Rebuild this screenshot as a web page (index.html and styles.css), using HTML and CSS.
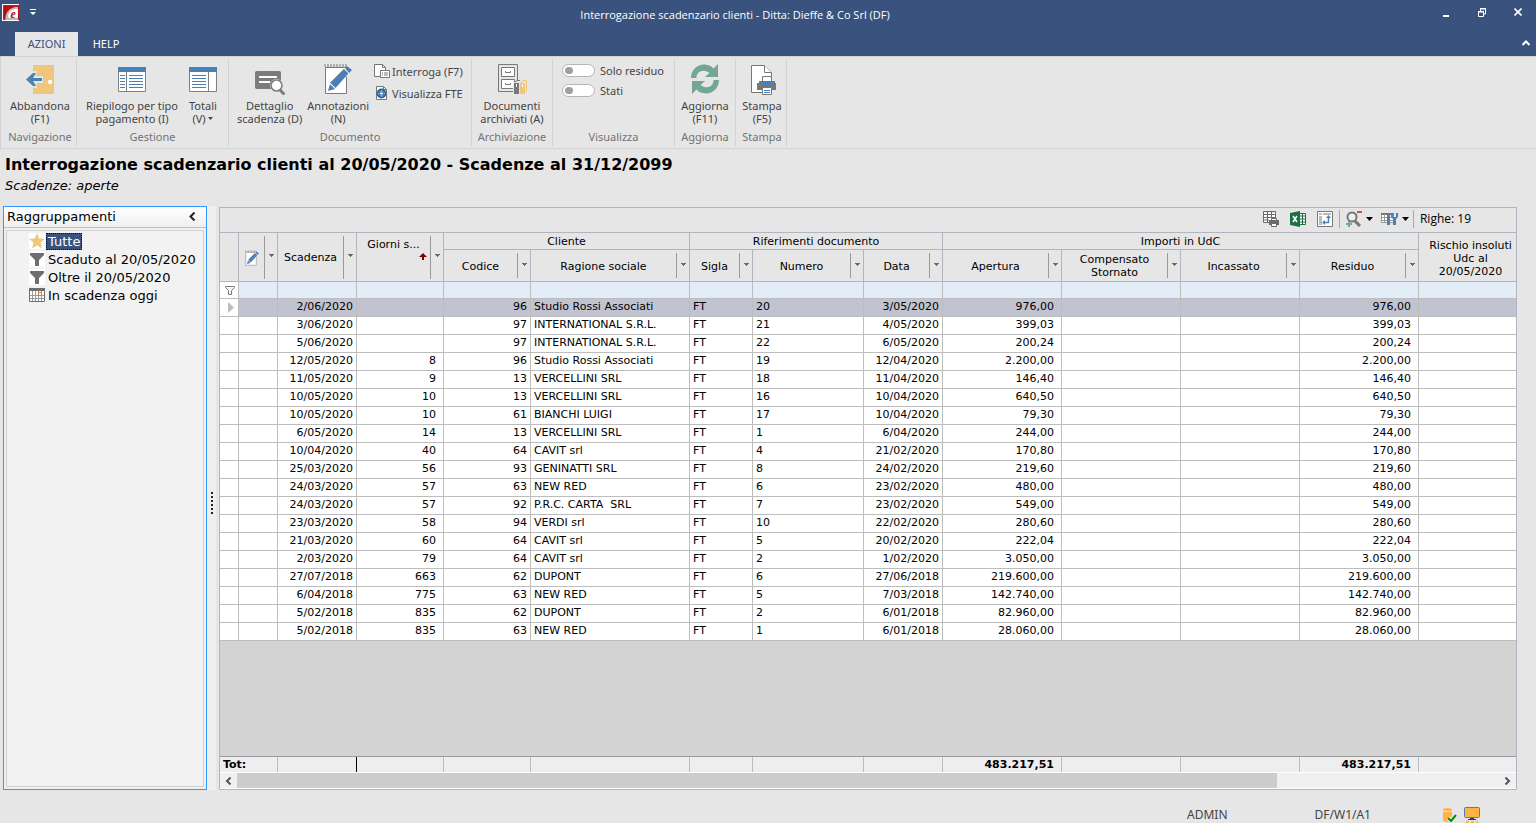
FILE: index.html
```html
<!DOCTYPE html>
<html lang="it">
<head>
<meta charset="utf-8">
<title>Interrogazione scadenzario clienti</title>
<link rel="stylesheet" href="styles.css">
</head>
<body>
<svg class="defs" aria-hidden="true">
  <symbol id="dd" viewBox="0 0 5 3"><path d="M0 0h5v1H4v1H3v1H2V2H1V1H0z" fill="#6b6b6b"/></symbol>
  <symbol id="funnel" viewBox="0 0 16 16"><path d="M0 0h16v16H0z" fill="#fff"/><path d="M1 2h14v2l-5 5v6H6V9L1 4z" fill="#6e6e6e"/></symbol>
  <symbol id="note" viewBox="0 0 28 32"><path d="M1.500 4.500h21v26h-21z" fill="#fff" stroke="#7b7b7b"/><path d="M1 4V1M4 5V1M7 5V1M10 5V1M13 5V1M16 5V1M19 5V1M22 5V1" stroke="#7b7b7b"/><path d="M4 27l2-8L20 5l6 5L11 25z" fill="#fff"/><path d="M4 28l2-7 5 5zM6.500 20L20 6l4.500 4.500L11.500 25z" fill="#4a80b8"/><path d="M6 20L20 6M5 27l-1 1" stroke="#9b9b9b" fill="none"/><path d="M21 5l2-2 5 4-3 3z" fill="#4a80b8"/></symbol>
</svg>

<header class="titlebar">
  <svg class="logo" viewBox="0 0 16 16"><path d="M0 0h16v16H0z" fill="#fff"/><path d="M1 1h15v14H1z" fill="#b90d16"/><path d="M3 15C3 7 8 2.500 15 2.500V15z" fill="#bbb"/><path d="M6 13C5 8 9 4.500 15 4.500V13z" fill="#fff"/><text x="8" y="13" class="logo-e">e</text></svg>
  <button class="quick" aria-label="Personalizza"><svg width="6" height="6" viewBox="0 0 6 6"><path d="M0 0h6v1H0zM0 3h6L3 6z" fill="#fff"/></svg></button>
  <h1 class="caption">Interrogazione scadenzario clienti - Ditta: Dieffe &amp; Co Srl (DF)</h1>
  <div class="winbtns">
    <button aria-label="Riduci"><svg width="8" height="9" viewBox="0 0 8 9"><path d="M1 7h6v2H1z" fill="#fff"/></svg></button>
    <button aria-label="Ripristina"><svg width="8" height="9" viewBox="0 0 8 9"><path d="M2.500 3V.500h5V6H6M.500 3.500h5v5h-5z" fill="none" stroke="#fff"/><path d="M2 0h6v1.500H2zM0 3h6v1.500H0z" fill="#fff"/></svg></button>
    <button aria-label="Chiudi"><svg width="8" height="8" viewBox="0 0 8 8"><path d="M.500.500l7 7m0-7l-7 7" stroke="#fff" stroke-width="1.600"/></svg></button>
  </div>
</header>
<nav class="tabs">
  <button class="tab active">AZIONI</button>
  <button class="tab">HELP</button>
  <button class="collapse" aria-label="Comprimi barra"><svg width="8" height="6" viewBox="0 0 8 6"><path d="M.500 5L4 1.500 7.500 5" fill="none" stroke="#fff" stroke-width="2"/></svg></button>
</nav>

<section class="ribbon">
  <div class="group g-nav">
    <div class="tools">
      <button class="big"><svg width="30" height="32" viewBox="0 0 30 32"><path d="M8 2h21v29H8z" fill="#efc67c"/><circle cx="25" cy="19" r="2.200" fill="#fff"/><path d="M0 16l9-8h3l-1 5h7v7h-7l1 5H9z" fill="#e6e6e6"/><path d="M1 16.500L8 10h3l-3 5h9v3H8l3 5H8z" fill="#4a80b8"/></svg><span>Abbandona<br>(F1)</span></button>
    </div>
    <div class="gname">Navigazione</div>
  </div>
  <div class="group g-ges">
    <div class="tools">
      <button class="big"><svg width="28" height="32" viewBox="0 0 28 32"><path d="M.500 6v22.500h27V6z" fill="#fff" stroke="#808080"/><path d="M0 4h28v5H0z" fill="#4a80b8"/><path d="M8.500 9v19" stroke="#808080"/><path d="M2 12.500h5M2 15.500h5M2 18.500h5M2 21.500h5M2 24.500h5M11 12.500h14M11 15.500h14M11 18.500h14M11 21.500h14M11 24.500h14" stroke="#4a80b8"/></svg><span>Riepilogo per tipo<br>pagamento (I)</span></button>
      <button class="big"><svg width="28" height="32" viewBox="0 0 28 32"><path d="M.500 6v22.500h27V6z" fill="#fff" stroke="#808080"/><path d="M0 4h28v5H0z" fill="#4a80b8"/><path d="M19.500 9v19" stroke="#808080"/><path d="M3 12.500h14M3 15.500h14M3 18.500h14M3 21.500h14M3 24.500h14" stroke="#4a80b8"/></svg><span>Totali<br>(V) <svg class="tri" viewBox="0 0 5 3"><path d="M0 0h5L2.500 3z" fill="#444"/></svg></span></button>
    </div>
    <div class="gname">Gestione</div>
  </div>
  <div class="group g-doc">
    <div class="tools">
      <button class="big"><svg width="30" height="32" viewBox="0 0 30 32"><rect y="8" width="26" height="18" rx="2" fill="#7b7b7b"/><path d="M4 14h18M4 19h11" stroke="#fff" stroke-width="2"/><circle cx="21.500" cy="22.500" r="6.500" fill="#fff"/><circle cx="21.500" cy="22.500" r="5.500" fill="#fff" stroke="#7b7b7b" stroke-width="1.600"/><path d="M25 27l4.500 4.500" stroke="#7b7b7b" stroke-width="3"/></svg><span>Dettaglio<br>scadenza (D)</span></button>
      <button class="big"><svg width="28" height="32"><use href="#note"/></svg><span>Annotazioni<br>(N)</span></button>
      <div class="stack">
        <button class="small"><svg width="16" height="16" viewBox="0 0 16 16"><path d="M.500 1.500h8l3 3v9h-11z" fill="#fff" stroke="#777"/><path d="M8.500 1.500v3h3" fill="none" stroke="#777"/><path d="M6.500 7.500h9v7h-9z" fill="#fff" stroke="#777"/><path d="M8 10h1M10 10h4M8 12h1M10 12h4" stroke="#777"/></svg><span>Interroga (F7)</span></button>
        <button class="small"><svg width="16" height="16" viewBox="0 0 16 16"><path d="M2.500 1.500h7l3 3v10h-10z" fill="#fff" stroke="#777"/><path d="M9.500 1.500v3h3" fill="none" stroke="#777"/><circle cx="7.500" cy="8.500" r="4" fill="#eaf2fa" stroke="#2f67a6" stroke-width="2"/><ellipse cx="7.500" cy="8.500" rx="2" ry="4" fill="none" stroke="#2f67a6"/><path d="M4 7h7M4 10h7" stroke="#2f67a6"/></svg><span>Visualizza FTE</span></button>
      </div>
    </div>
    <div class="gname">Documento</div>
  </div>
  <div class="group g-arc">
    <div class="tools">
      <button class="big"><svg width="30" height="32" viewBox="0 0 30 32"><path d="M1.500 1.500h19v27h-19z" fill="#e6e6e6" stroke="#777"/><path d="M4.500 4.500h13v9h-13zM4.500 16.500h13v9h-13z" fill="#fff" stroke="#777"/><path d="M8.500 8v1.500h5V8M8.500 20v1.500h5V20" fill="none" stroke="#777"/><path d="M16 20l5-3h9v12l-2 3H16z" fill="#e6e6e6"/><path d="M17 20h5v11h-5z" fill="#777"/><path d="M23 20h5v11h-5z" fill="#efc67c"/><path d="M18 19l2-1.500h3" fill="none" stroke="#777"/><path d="M24 19l2-1.500h3.500V29" fill="none" stroke="#efc67c"/><path d="M19.500 21v3" stroke="#fff"/><path d="M25.500 21v3" stroke="#fff"/></svg><span>Documenti<br>archiviati (A)</span></button>
    </div>
    <div class="gname">Archiviazione</div>
  </div>
  <div class="group g-vis">
    <div class="tools switches">
      <label><input type="checkbox" class="switch">Solo residuo</label>
      <label><input type="checkbox" class="switch">Stati</label>
    </div>
    <div class="gname">Visualizza</div>
  </div>
  <div class="group g-agg">
    <div class="tools">
      <button class="big"><svg width="28" height="32" viewBox="0 0 28 32"><path d="M0 15C0 6 8 0 16 2c3 0 5 2 6.500 3.500L27 1v13H14l4.500-4C12 5 5 9 5.500 15z" fill="#74a793"/><path d="M28 17c0 9-8 15-16 13-3 0-5-2-6.500-3.500L1 31V18h13l-4.500 4c6.500 5 13.500 1 13-5z" fill="#74a793"/></svg><span>Aggiorna<br>(F11)</span></button>
    </div>
    <div class="gname">Aggiorna</div>
  </div>
  <div class="group g-sta">
    <div class="tools">
      <button class="big"><svg width="28" height="32" viewBox="0 0 28 32"><path d="M3.500 2.500h13l7 7v20h-20z" fill="#fff" stroke="#777"/><path d="M16.500 2.500v7h7" fill="#fff" stroke="#777"/><path d="M9 20h19v7H9zM11 18h2v2h-2zM25 18h2v2h-2z" fill="#777"/><path d="M14.500 13.500h9v5h-9z" fill="#fff" stroke="#777"/><path d="M13 18h12v4H13z" fill="#4a80b8"/><path d="M14.500 24.500h9v7h-9z" fill="#fff" stroke="#777"/><path d="M16 27.500h6M16 29.500h6" stroke="#4a80b8"/></svg><span>Stampa<br>(F5)</span></button>
    </div>
    <div class="gname">Stampa</div>
  </div>
</section>

<div class="heading">
  <h2>Interrogazione scadenzario clienti al 20/05/2020 - Scadenze al 31/12/2099</h2>
  <p>Scadenze: aperte</p>
</div>

<main class="work">
  <aside class="side">
    <div class="side-head"><span>Raggruppamenti</span><button aria-label="Chiudi pannello"><svg width="7" height="9" viewBox="0 0 7 9"><path d="M5.500.500l-4 4 4 4" fill="none" stroke="#222" stroke-width="2"/></svg></button></div>
    <ul class="tree">
      <li><button class="sel"><svg viewBox="0 0 16 16"><path d="M0 0h16v16H0z" fill="#fff"/><path d="M8 0l2.200 5.500 5.800.300-4.500 3.800L13 15.500 8 12.200l-5 3.300 1.500-5.900L0 5.800l5.800-.300z" fill="#efc67c"/></svg><span>Tutte</span></button></li>
      <li><button><svg><use href="#funnel"/></svg><span>Scaduto al 20/05/2020</span></button></li>
      <li><button><svg><use href="#funnel"/></svg><span>Oltre il 20/05/2020</span></button></li>
      <li><button><svg viewBox="0 0 16 16"><path d="M.500 1.500h15v13H.500z" fill="#fff" stroke="#6e6e6e"/><path d="M0 1h16v3H0z" fill="#6e6e6e"/><path d="M3.500 4v10M6.500 4v10M9.500 4v10M12.500 4v10M1 8.500h14M1 11.500h14" stroke="#999"/><path d="M9.500 5.500h3v3h-3z" fill="#fff" stroke="#e07b2e"/></svg><span>In scadenza oggi</span></button></li>
    </ul>
  </aside>
  <div class="splitter"><i></i></div>
  <section class="grid">
    <div class="gridbar">
      <button aria-label="Stampa griglia"><svg width="16" height="16" viewBox="0 0 16 16"><path d="M.500 1.500h12v10H.500z" fill="#fff"/><path d="M12.500 7V.500H.500v11H6M0 3.500h13M0 6.500h13M0 9h6M4.500 0v11M8.500 0v6" fill="none" stroke="#6b6b6b"/><path d="M6 9h10v5H6z" fill="#6b6b6b"/><path d="M8.500 7.500h5v2h-5zM8.500 12.500h5v3h-5z" fill="#fff" stroke="#6b6b6b"/></svg></button>
      <button aria-label="Esporta Excel"><svg width="16" height="16" viewBox="0 0 16 16"><path d="M9 2.500h6.500v11H9z" fill="#fff" stroke="#1d7044"/><path d="M10 5h5M10 8h5M10 11h5M12.500 3v10" stroke="#1d7044"/><path d="M0 2l10-2v16L0 14z" fill="#1d7044"/><path d="M3 5l4 6M7 5l-4 6" stroke="#fff" stroke-width="1.500"/></svg></button>
      <button aria-label="Layout"><svg width="16" height="16" viewBox="0 0 16 16"><path d="M.500.500h15v15H.500z" fill="#fff" stroke="#777"/><path d="M2 2h3v2H2zM6 2h8v2H6zM2 5h3v9H2z" fill="#bbb"/><path d="M5 11.500l3-2.500v5zM11.500 4l2.500 3H9z" fill="#4a80b8"/><path d="M7 11.500h4.500V6" fill="none" stroke="#4a80b8" stroke-width="1.500"/></svg></button>
      <span class="vsep"></span>
      <button class="zoomb" aria-label="Ricerca"><svg width="17" height="16" viewBox="0 0 17 16"><circle cx="7" cy="6" r="4.500" fill="#eee" stroke="#777" stroke-width="2"/><path d="M10 10l5 5" stroke="#777" stroke-width="3"/><path d="M12 1h5" stroke="#d9532c" stroke-width="2"/><path d="M1 13h6M4 10v6" stroke="#74a793" stroke-width="2"/></svg><svg width="7" height="4" viewBox="0 0 7 4"><path d="M0 0h7L3.500 4z"/></svg></button>
      <button class="cfgb" aria-label="Impostazioni"><svg width="17" height="16" viewBox="0 0 17 16"><path d="M.500 2.500h12v9H.500z" fill="#fff" stroke="#999"/><path d="M0 2h13v2H0z" fill="#777"/><path d="M1 6.500h11M1 9.500h11M3.500 3v9" stroke="#999"/><path d="M6 4h3v10H6zM10 2v4l2 2v6h3V8l2-2V2h-2v4h-3V2z" fill="#4a80b8"/></svg><svg width="7" height="4" viewBox="0 0 7 4"><path d="M0 0h7L3.500 4z"/></svg></button>
      <span class="vsep"></span>
      <span class="count">Righe: 19</span>
    </div>
    <table class="data">
      <colgroup><col class="w19"><col class="w39"><col class="w79"><col class="w87"><col class="w87"><col class="w159"><col class="w63"><col class="w111"><col class="w79"><col class="w119"><col class="w119"><col class="w119"><col class="w119"><col></colgroup>
      <thead>
        <tr class="h1">
          <th rowspan="2"></th>
          <th rowspan="2"><div class="hd tall"><span><svg class="mini"><use href="#note"/></svg></span><button aria-label="Filtra note"><svg><use href="#dd"/></svg></button></div></th>
          <th rowspan="2"><div class="hd tall"><span>Scadenza</span><button aria-label="Filtra"><svg><use href="#dd"/></svg></button></div></th>
          <th rowspan="2"><div class="hd tall sorted"><span>Giorni s...<svg class="sort" viewBox="0 0 8 7"><path d="M4 0l4 4H5v3H3V4H0z" fill="#800000"/></svg></span><button aria-label="Filtra"><svg><use href="#dd"/></svg></button></div></th>
          <th colspan="2">Cliente</th>
          <th colspan="3">Riferimenti documento</th>
          <th colspan="4">Importi in UdC</th>
          <th rowspan="2" class="wrap">Rischio insoluti<br>Udc al<br>20/05/2020</th>
        </tr>
        <tr class="h2">
          <th><div class="hd"><span>Codice</span><button aria-label="Filtra"><svg><use href="#dd"/></svg></button></div></th>
          <th><div class="hd"><span>Ragione sociale</span><button aria-label="Filtra"><svg><use href="#dd"/></svg></button></div></th>
          <th><div class="hd"><span>Sigla</span><button aria-label="Filtra"><svg><use href="#dd"/></svg></button></div></th>
          <th><div class="hd"><span>Numero</span><button aria-label="Filtra"><svg><use href="#dd"/></svg></button></div></th>
          <th><div class="hd"><span>Data</span><button aria-label="Filtra"><svg><use href="#dd"/></svg></button></div></th>
          <th><div class="hd"><span>Apertura</span><button aria-label="Filtra"><svg><use href="#dd"/></svg></button></div></th>
          <th><div class="hd"><span>Compensato<br>Stornato</span><button aria-label="Filtra"><svg><use href="#dd"/></svg></button></div></th>
          <th><div class="hd"><span>Incassato</span><button aria-label="Filtra"><svg><use href="#dd"/></svg></button></div></th>
          <th><div class="hd"><span>Residuo</span><button aria-label="Filtra"><svg><use href="#dd"/></svg></button></div></th>
        </tr>
        <tr class="filter"><td class="mark"><svg width="10" height="9" viewBox="0 0 10 9"><path d="M.500.500h9v1l-3 3v4h-3v-4l-3-3z" fill="#fff" stroke="#777"/></svg><td><td><td><td><td><td><td><td><td><td><td><td><td></tr>
      </thead>
      <tbody>
        <tr class="cur"><td class="mark"><svg width="6" height="11" viewBox="0 0 6 11"><path d="M0 0l6 5.500L0 11z" fill="#bdbdbd"/></svg><td><td>2/06/2020<td><td>96<td>Studio Rossi Associati<td>FT<td>20<td>3/05/2020<td>976,00<td><td><td>976,00<td></tr>
        <tr><td><td><td>3/06/2020<td><td>97<td>INTERNATIONAL S.R.L.<td>FT<td>21<td>4/05/2020<td>399,03<td><td><td>399,03<td></tr>
        <tr><td><td><td>5/06/2020<td><td>97<td>INTERNATIONAL S.R.L.<td>FT<td>22<td>6/05/2020<td>200,24<td><td><td>200,24<td></tr>
        <tr><td><td><td>12/05/2020<td>8<td>96<td>Studio Rossi Associati<td>FT<td>19<td>12/04/2020<td>2.200,00<td><td><td>2.200,00<td></tr>
        <tr><td><td><td>11/05/2020<td>9<td>13<td>VERCELLINI SRL<td>FT<td>18<td>11/04/2020<td>146,40<td><td><td>146,40<td></tr>
        <tr><td><td><td>10/05/2020<td>10<td>13<td>VERCELLINI SRL<td>FT<td>16<td>10/04/2020<td>640,50<td><td><td>640,50<td></tr>
        <tr><td><td><td>10/05/2020<td>10<td>61<td>BIANCHI LUIGI<td>FT<td>17<td>10/04/2020<td>79,30<td><td><td>79,30<td></tr>
        <tr><td><td><td>6/05/2020<td>14<td>13<td>VERCELLINI SRL<td>FT<td>1<td>6/04/2020<td>244,00<td><td><td>244,00<td></tr>
        <tr><td><td><td>10/04/2020<td>40<td>64<td>CAVIT srl<td>FT<td>4<td>21/02/2020<td>170,80<td><td><td>170,80<td></tr>
        <tr><td><td><td>25/03/2020<td>56<td>93<td>GENINATTI SRL<td>FT<td>8<td>24/02/2020<td>219,60<td><td><td>219,60<td></tr>
        <tr><td><td><td>24/03/2020<td>57<td>63<td>NEW RED<td>FT<td>6<td>23/02/2020<td>480,00<td><td><td>480,00<td></tr>
        <tr><td><td><td>24/03/2020<td>57<td>92<td>P.R.C. CARTA&nbsp; SRL<td>FT<td>7<td>23/02/2020<td>549,00<td><td><td>549,00<td></tr>
        <tr><td><td><td>23/03/2020<td>58<td>94<td>VERDI srl<td>FT<td>10<td>22/02/2020<td>280,60<td><td><td>280,60<td></tr>
        <tr><td><td><td>21/03/2020<td>60<td>64<td>CAVIT srl<td>FT<td>5<td>20/02/2020<td>222,04<td><td><td>222,04<td></tr>
        <tr><td><td><td>2/03/2020<td>79<td>64<td>CAVIT srl<td>FT<td>2<td>1/02/2020<td>3.050,00<td><td><td>3.050,00<td></tr>
        <tr><td><td><td>27/07/2018<td>663<td>62<td>DUPONT<td>FT<td>6<td>27/06/2018<td>219.600,00<td><td><td>219.600,00<td></tr>
        <tr><td><td><td>6/04/2018<td>775<td>63<td>NEW RED<td>FT<td>5<td>7/03/2018<td>142.740,00<td><td><td>142.740,00<td></tr>
        <tr><td><td><td>5/02/2018<td>835<td>62<td>DUPONT<td>FT<td>2<td>6/01/2018<td>82.960,00<td><td><td>82.960,00<td></tr>
        <tr><td><td><td>5/02/2018<td>835<td>63<td>NEW RED<td>FT<td>1<td>6/01/2018<td>28.060,00<td><td><td>28.060,00<td></tr>
      </tbody>
    </table>
    <div class="void"></div>
    <table class="totals">
      <colgroup><col class="w19"><col class="w39"><col class="w79"><col class="w87"><col class="w87"><col class="w159"><col class="w63"><col class="w111"><col class="w79"><col class="w119"><col class="w119"><col class="w119"><col class="w119"><col></colgroup>
      <tr><th colspan="2">Tot:</th><td class="dark"><td><td><td><td><td><td><td>483.217,51<td><td><td>483.217,51<td></tr>
    </table>
    <div class="hscroll">
      <button aria-label="Scorri a sinistra"><svg width="7" height="8" viewBox="0 0 7 8"><path d="M5.500.500L2 4l3.500 3.500" fill="none" stroke="#555" stroke-width="2"/></svg></button>
      <div class="track"><div class="thumb"></div></div>
      <button aria-label="Scorri a destra"><svg width="7" height="8" viewBox="0 0 7 8"><path d="M1.500.500L5 4 1.500 7.500" fill="none" stroke="#555" stroke-width="2"/></svg></button>
    </div>
  </section>
</main>

<footer class="status">
  <span class="user">ADMIN</span>
  <span class="ws">DF/W1/A1</span>
  <svg width="16" height="16" viewBox="0 0 16 16"><path d="M1 2q4-2 9 0v12q-5 2-9 0z" fill="#ffb347"/><path d="M1 4q4 1.500 9 0" fill="none" stroke="#e6e6e6"/><path d="M6 11l3 3 5-6" fill="none" stroke="#e6e6e6" stroke-width="4"/><path d="M6 11l3 3 5-6" fill="none" stroke="#0a8f0a" stroke-width="2"/></svg>
  <svg width="16" height="16" viewBox="0 0 16 16"><rect x=".500" y=".500" width="15" height="10" rx="1" fill="#ffb347" stroke="#4a80b8"/><path d="M6 11h4v1h2v1H4v-1h2z" fill="#245"/><path d="M2 15h3M7 15h3M12 15h2" stroke="#ffb347" stroke-width="2"/></svg>
</footer>
</body>
</html>
```
FILE: styles.css
```css
* { box-sizing: border-box; }
body {
  margin: 0;
  height: 100vh;
  display: flex;
  flex-direction: column;
  overflow: hidden;
  background: #e6e6e6;
  color: #000;
  font: 12px/13px "Open Sans", "Noto Sans", sans-serif;
}
button {
  margin: 0;
  padding: 0;
  border: 0;
  background: none;
  color: inherit;
  font: inherit;
}
svg { display: block; flex: none; }
h1, h2, p, ul { margin: 0; padding: 0; }
.defs { display: none; }

/* title bar */
.titlebar {
  display: flex;
  align-items: center;
  height: 32px;
  padding: 0 14px 8px 2px;
  background: #3a537e;
  color: #fff;
}
.logo { width: 17px; height: 17px; }
.logo-e { font: italic bold 11px "Liberation Serif", serif; fill: #b90d16; }
.quick { margin-left: 11px; }
.caption {
  flex: 1;
  padding: 5px 8px 0 0;
  text-align: center;
  font-size: 11px;
  font-weight: 400;
}
.winbtns { display: flex; gap: 28px; }

.tabs {
  display: flex;
  height: 24px;
  padding-left: 15px;
  background: #3a537e;
  color: #fff;
}
.tab { width: 63px; padding-bottom: 2px; font-size: 11px; font-family: "Noto Sans", sans-serif; }
.tab + .tab { width: 56px; }
.tab.active { background: #e6e6e6; color: #3a537e; }
.collapse { margin: 0 6px 2px auto; }

/* ribbon */
.ribbon {
  display: flex;
  height: 93px;
  padding: 3px 0 2px 1px;
  border: solid #d2d2d2;
  border-width: 1px 0 1px 1px;
  color: #444;
  font-size: 11px;
  font-family: "Noto Sans", sans-serif;
}
.group {
  display: flex;
  flex-direction: column;
  border-right: 1px solid #d2d2d2;
}
.tools { flex: 1; display: flex; justify-content: center; }
.gname { height: 16px; text-align: center; color: #737373; line-height: 14px; }
.g-nav { width: 75px; padding-left: 2px; }
.g-ges { width: 152px; }
.g-doc { width: 243px; }
.g-arc { width: 81px; }
.g-vis { width: 122px; }
.g-agg { width: 61px; }
.g-sta { width: 51px; padding-left: 2px; }
.big {
  display: flex;
  flex-direction: column;
  align-items: center;
  gap: 4px;
  padding-top: 3px;
  white-space: nowrap;
}
.g-ges .tools { gap: 11px; padding-right: 2px; }
.g-doc .tools { justify-content: flex-start; gap: 5px; padding-left: 8px; }
.tri { display: inline-block; width: 5px; height: 3px; vertical-align: 3px; }
.stack { display: flex; flex-direction: column; gap: 6px; padding-top: 3px; }
.small { display: flex; align-items: center; gap: 2px; white-space: nowrap; }
.tools.switches {
  flex-direction: column;
  justify-content: flex-start;
  gap: 7px;
  padding: 4px 0 0 9px;
}
.switches label { display: flex; align-items: center; gap: 5px; }
.switch {
  appearance: none;
  width: 33px;
  height: 13px;
  margin: 0;
  padding: 2px;
  border: 1px solid #b4b4b4;
  border-radius: 7px;
  background: #fff;
}
.switch::before {
  content: "";
  display: block;
  width: 8px;
  height: 7px;
  border-radius: 4px;
  background: #a0a0a0;
}

/* page heading */
.heading {
  height: 57px;
  padding: 6px 5px 5px;
  font-family: "DejaVu Sans", Verdana, sans-serif;
}
.heading h2 { font-size: 16px; line-height: 20px; }
.heading p { padding-top: 3px; font-size: 13px; font-style: italic; line-height: 16px; }

/* work area */
.work {
  flex: 1;
  display: flex;
  min-height: 0;
  padding: 0 19px 0 3px;
  font-family: "DejaVu Sans", Verdana, sans-serif;
}
.side {
  display: flex;
  flex-direction: column;
  width: 204px;
  border: 1px solid #3399ff;
  background: #f0f0f0;
  font-size: 13px;
}
.side-head {
  display: flex;
  align-items: center;
  justify-content: space-between;
  height: 21px;
  padding: 0 10px 1px 3px;
  border-bottom: 1px solid #c0c0c0;
  background: linear-gradient(#fff, #efefef);
}
.tree {
  flex: 1;
  margin: 2px;
  padding: 1px 0 0 22px;
  border: 1px solid #d0d0d0;
  background: #f2f2f2;
  list-style: none;
}
.tree button { display: flex; align-items: center; gap: 1px; height: 18px; }
.tree svg { width: 16px; height: 16px; }
.tree span { padding: 0 2px; line-height: 17px; }
.tree .sel span { background: #3a537e; color: #fff; outline: 1px dotted #111; outline-offset: -1px; }
.splitter {
  display: flex;
  align-items: center;
  justify-content: center;
  width: 9px;
  margin-right: 3px;
  padding-top: 10px;
  background: #efefef;
}
.splitter i {
  width: 2px;
  height: 22px;
  background: repeating-linear-gradient(#222 0 2px, transparent 2px 4px);
}
.grid {
  flex: 1;
  display: flex;
  flex-direction: column;
  min-width: 0;
  border: 1px solid #b1b5bf;
  margin-top: 1px;
  font-size: 11px;
}
.gridbar {
  display: flex;
  align-items: center;
  justify-content: flex-end;
  height: 25px;
  padding: 0 45px 2px 0;
  border-bottom: 1px solid #b1b5bf;
  font: 12px/16px "Open Sans", "Noto Sans", sans-serif;
}
.gridbar button { display: flex; align-items: center; gap: 4px; margin-right: 11px; }
.gridbar .zoomb { margin: 0 8px 0 5px; }
.gridbar .cfgb { margin-right: 4px; }
.vsep { width: 1px; height: 18px; background: #aaa; }
.vsep:first-of-type { margin-left: -5px; }
.count { margin-left: 6px; }

table {
  width: 100%;
  table-layout: fixed;
  border-collapse: separate;
  border-spacing: 0;
}
.w19 { width: 19px; }
.w39 { width: 39px; }
.w63 { width: 63px; }
.w79 { width: 79px; }
.w87 { width: 87px; }
.w111 { width: 111px; }
.w119 { width: 119px; }
.w159 { width: 159px; }
th, td {
  padding: 0 3px;
  border: solid #bdbdbd;
  border-width: 0 1px 1px 0;
  white-space: nowrap;
  overflow: hidden;
}
th { padding: 0; border-color: #b1b5bf; font-weight: 400; }
tr > :last-child { border-right: 0; }
.h2 > th:last-child { border-right: 1px solid #b1b5bf; }
.h1 { height: 17px; }
.h2 { height: 32px; }
.wrap { padding: 2px 0 0 6px; }
.hd { display: flex; align-items: stretch; height: 25px; }
.hd.tall { height: 43px; }
.hd span { flex: 1; display: flex; flex-direction: column; justify-content: center; align-items: center; padding-top: 1px; }
.hd button {
  display: flex;
  align-items: center;
  justify-content: center;
  width: 13px;
  padding-bottom: 3px;
  border-left: 1px solid #9a9a9a;
}
.hd button svg { width: 5px; height: 3px; }
.hd .mini { width: 14px; height: 16px; }
.hd.sorted span { justify-content: flex-start; padding-top: 2px; }
.hd .sort { width: 8px; height: 7px; margin: 2px 3px 0 auto; }
.filter td { height: 17px; background: #e3edf7; }
.filter .mark, .cur .mark { padding: 0; background: #fff; }
.filter .mark { padding-left: 2px; }
.mark svg { margin: auto; }
.cur .mark svg { margin-left: 8px; }
tbody td { height: 18px; background: #fff; line-height: 13px; padding-bottom: 2px; }
tbody td:nth-child(3), tbody td:nth-child(5), tbody td:nth-child(9) { text-align: right; }
tbody td:nth-child(4), tbody td:nth-child(10), tbody td:nth-child(13) { padding-right: 7px; text-align: right; }
.cur td { background: #c2c3d1; }
.void { flex: 1; background: #d3d3d3; }
.totals { border-top: 1px solid #9a9a9a; font-weight: 700; }
.totals th, .totals td { height: 15px; padding: 0 7px 0 3px; border-bottom: 0; border-color: #bdbdbd; background: #eeeef0; line-height: 13px; text-align: right; }
.totals th { text-align: left; font-weight: 700; }
.totals .dark { border-right-color: #000; }
.hscroll { display: flex; height: 17px; border: solid #fff; border-width: 1px 0; background: #f0f0f0; }
.hscroll button { display: flex; align-items: center; justify-content: center; width: 17px; }
.track { flex: 1; }
.thumb { width: 82.4%; height: 100%; background: #cdcdcd; }

/* status bar */
.status {
  display: flex;
  align-items: center;
  justify-content: flex-end;
  height: 33px;
  padding: 16px 56px 0 0;
  color: #444;
  font-size: 12px;
  font-family: "Noto Sans", sans-serif;
}
.user { margin-right: 87px; }
.ws { margin-right: 71px; }
.status svg + svg { margin-left: 6px; }
```
